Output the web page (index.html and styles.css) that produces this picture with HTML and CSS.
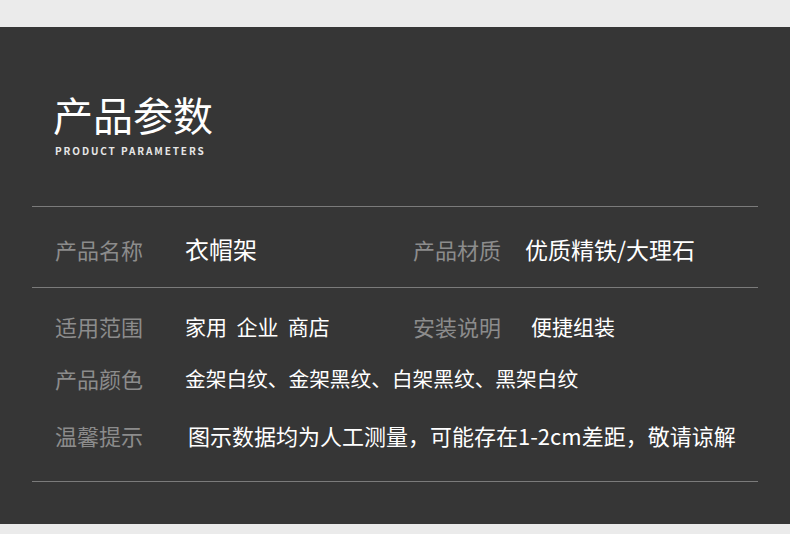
FILE: index.html
```html
<!DOCTYPE html>
<html>
<head>
  <meta charset="utf-8" />
  <title>产品参数</title>
  <link rel="stylesheet" href="styles.css">
</head>
<body>
  <div class="panel">
    <div class="heading">
      <h1>产品参数</h1>
      <p class="sub">PRODUCT PARAMETERS</p>
    </div>

    <div class="specs">
      <div class="row row-top">
        <span class="label">产品名称</span>
        <span class="value big">衣帽架</span>
        <span class="label">产品材质</span>
        <span class="value mid">优质精铁/大理石</span>
      </div>

      <div class="group">
        <div class="row">
          <span class="label">适用范围</span>
          <span class="value">家用&nbsp;&nbsp;企业&nbsp;&nbsp;商店</span>
          <span class="label">安装说明</span>
          <span class="value shift">便捷组装</span>
        </div>
        <div class="row">
          <span class="label">产品颜色</span>
          <span class="value wide small">金架白纹、金架黑纹、白架黑纹、黑架白纹</span>
        </div>
        <div class="row">
          <span class="label">温馨提示</span>
          <span class="value wide note">图示数据均为人工测量，可能存在1-2cm差距，敬请谅解</span>
        </div>
      </div>
    </div>
  </div>
</body>
</html>
```

FILE: styles.css
```css
/* Dark product-parameter sheet on a light grey page */

html, body {
  margin: 0;
  padding: 0;
}

body {
  background: #ebebeb;
  font-family: "Noto Sans CJK SC", "Noto Sans", sans-serif;
  padding-top: 27px;
}

.panel {
  background: #363636;
  height: 497px;
  padding: 0 32px;
  box-sizing: border-box;
}

.heading {
  padding: 63px 0 0 21px;
  height: 179px;
  box-sizing: border-box;
}

h1 {
  margin: 0;
  font-size: 40px;
  font-weight: 400;
  line-height: 48px;
  color: #ffffff;
}

.sub {
  margin: 6px 0 0 2px;
  font-size: 10px;
  font-weight: 700;
  letter-spacing: 1.9px;
  color: #e6e6e6;
  line-height: 14px;
}

.specs {
  border-top: 1px solid #7b7b7b;
}

.row {
  display: grid;
  grid-template-columns: 130px 228px 112px 1fr;
  align-items: center;
  padding-left: 23px;
}

.row-top {
  height: 81px;
  padding-top: 3px;
  box-sizing: border-box;
  border-bottom: 1px solid #7b7b7b;
}

.group {
  padding: 12px 0 15px;
  border-bottom: 1px solid #7b7b7b;
}

.group .row {
  height: 52px;
}

.group .row:last-child {
  height: 62px;
}

.label {
  font-size: 22px;
  color: #8c8c8c;
  white-space: nowrap;
}

.value {
  font-size: 21px;
  color: #ffffff;
  white-space: nowrap;
}

.value.big {
  font-size: 24px;
}

.value.mid {
  font-size: 23px;
}

.value.small {
  font-size: 20.7px;
}

.value.shift {
  padding-left: 6px;
}

.value.wide {
  grid-column: 2 / 5;
}

.value.note {
  font-size: 22px;
  padding-left: 3px;
}
```
